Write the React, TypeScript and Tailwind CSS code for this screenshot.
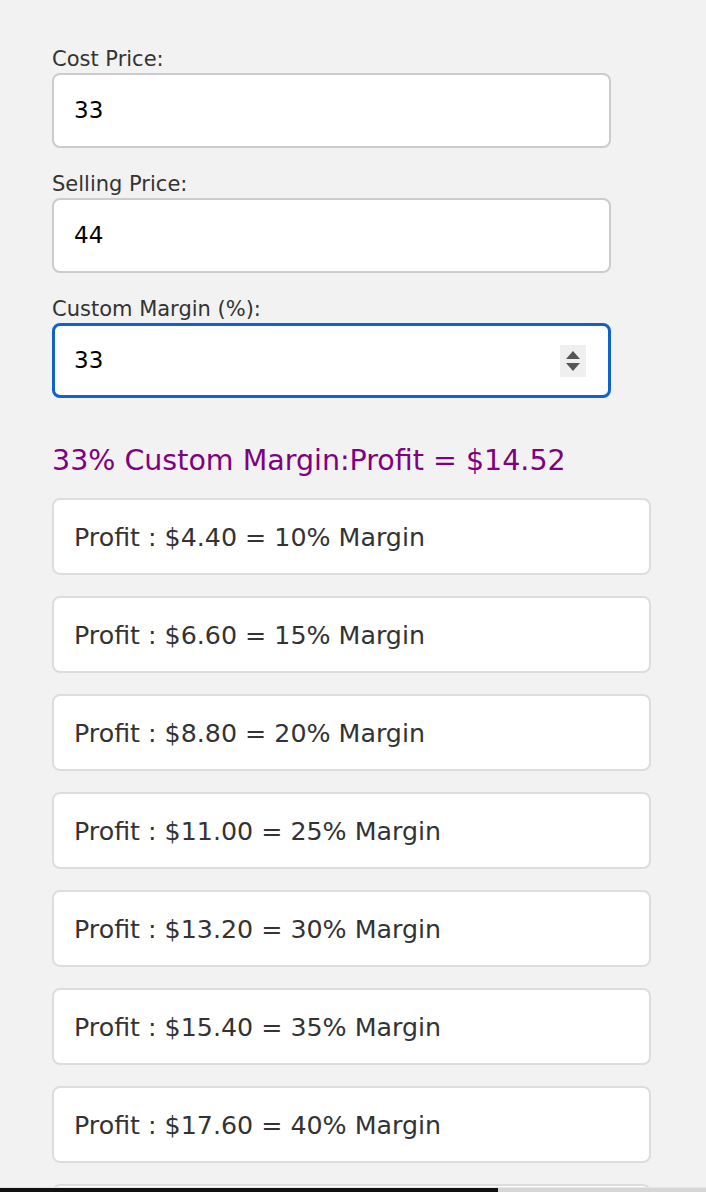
import React from "react";

const font = { fontFamily: '"DejaVu Sans", Verdana, sans-serif' };

function Field({ label, value, focused, spinner }: { label: string; value: string; focused?: boolean; spinner?: boolean }) {
  return (
    <div className="flex flex-col">
      <div className="text-[21px] leading-[24px] text-[#333] mt-[2px] mb-[2px]">{label}</div>
      <div
        className={
          focused
            ? "w-[559px] h-[75px] bg-white rounded-[8px] border-[3px] border-[#0f62cc] flex items-center pl-[19px] pr-[22px]"
            : "w-[559px] h-[75px] bg-white rounded-[8px] border-2 border-[#cccccc] flex items-center pl-[20px] pr-[22px]"
        }
      >
        <span className="flex-1 text-[23px] text-black">{value}</span>
        {spinner && (
          <div className="w-[26px] h-[32px] bg-[#efefef] flex flex-col items-center justify-center gap-[4px]">
            <svg width="14" height="8" viewBox="0 0 14 8"><path d="M7 0 L14 8 L0 8 Z" fill="#555" /></svg>
            <svg width="14" height="8" viewBox="0 0 14 8"><path d="M0 0 L14 0 L7 8 Z" fill="#555" /></svg>
          </div>
        )}
      </div>
    </div>
  );
}

export default function App() {
  const cost = 33;
  const sell = 44;
  const margins = [10, 15, 20, 25, 30, 35, 40, 45];
  return (
    <div className="min-h-screen bg-[#f2f2f2] pl-[52px] pt-[45px] pb-[40px]" style={font}>
      <div className="flex flex-col gap-[22px]">
        <Field label="Cost Price:" value={String(cost)} />
        <Field label="Selling Price:" value={String(sell)} />
        <Field label="Custom Margin (%):" value="33" focused spinner />
      </div>
      <div className="mt-[47px] text-[28.5px] leading-[32px] text-[#800080]">33% Custom Margin:Profit = $14.52</div>
      <div className="mt-[21px] flex flex-col gap-[21px]">
        {margins.map((m) => (
          <div
            key={m}
            className="w-[599px] h-[77px] bg-white rounded-[8px] border-2 border-[#dddddd] flex items-center pl-[20px] pt-[2px] text-[25.3px] text-[#333]"
          >
            Profit : ${((sell * m) / 100).toFixed(2)} = {m}% Margin
          </div>
        ))}
      </div>
      <div className="fixed left-0 right-0 bottom-0 h-[5px] border-t border-[#ece6d2] flex">
        <div className="w-[498px] bg-[#111111]" />
        <div className="flex-1 bg-[#d6d6d6]" />
      </div>
    </div>
  );
}
